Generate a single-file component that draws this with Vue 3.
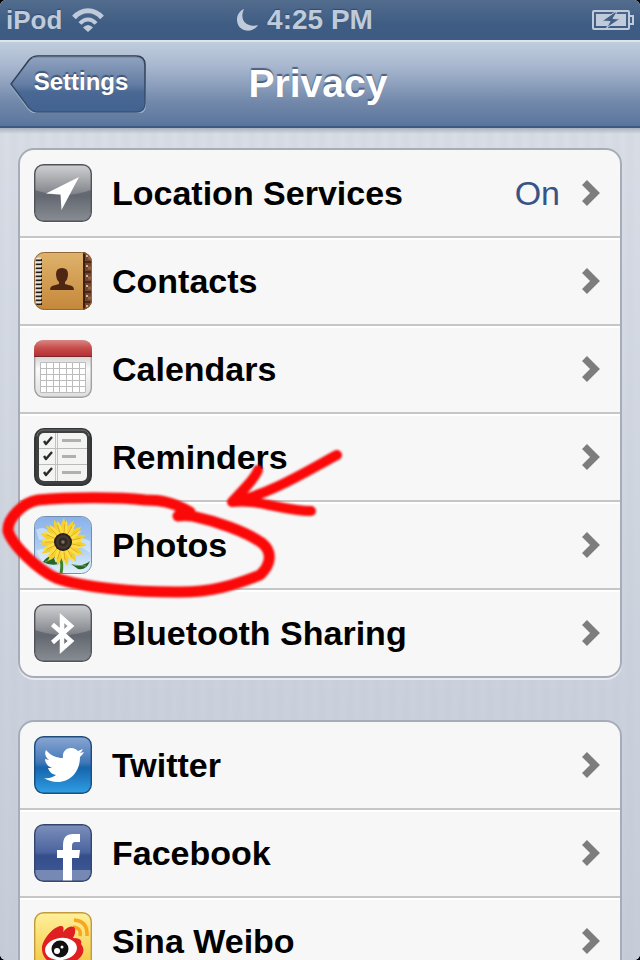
<script setup>
const groups = [
  [
    { id: 'location', label: 'Location Services', value: 'On' },
    { id: 'contacts', label: 'Contacts' },
    { id: 'calendars', label: 'Calendars' },
    { id: 'reminders', label: 'Reminders' },
    { id: 'photos', label: 'Photos' },
    { id: 'bluetooth', label: 'Bluetooth Sharing' },
  ],
  [
    { id: 'twitter', label: 'Twitter' },
    { id: 'facebook', label: 'Facebook' },
    { id: 'weibo', label: 'Sina Weibo' },
  ],
]
const range = (n) => Array.from({ length: n }, (_, i) => i)
const petals = range(15)
const rings = range(12)
const tabs = range(6)
</script>

<template>
  <div class="screen">
    <header class="status">
      <div class="status-side">
        <span class="device">iPod</span>
        <svg class="wifi" viewBox="0 0 32 24" aria-hidden="true">
          <g fill="none" stroke="currentColor" stroke-width="5">
            <path d="M2 9.500C10 .500 22 .500 30 9.500" />
            <path d="M8 15.500C12.500 10 19.500 10 24 15.500" stroke-width="4" />
          </g>
          <path d="M11 19.500q5-5 10 0L16 24z" fill="currentColor" />
        </svg>
      </div>
      <div class="clock">
        <svg class="moon" viewBox="0 0 22 22" aria-hidden="true">
          <path d="M7 0C-2 4-2 16 5 20c6 3.500 13 1 16-4C9 19 2 11 7 0z" fill="currentColor" />
        </svg>
        <span>4:25 PM</span>
      </div>
      <div class="status-side end">
        <svg class="battery" viewBox="0 0 42 20" aria-hidden="true">
          <rect x="1" y="1" width="36" height="18" rx="1" fill="none" stroke="currentColor" stroke-width="2" />
          <path d="M4 4h30v12H4z" fill="currentColor" />
          <path d="M38 6h3v8h-3" fill="none" stroke="currentColor" stroke-width="2" />
          <path d="M23 2L10 11l8 .500L14.500 18 28 9l-7-.500L25 2z" fill="#435f86" stroke="#bfcbda" stroke-width="1" />
        </svg>
      </div>
    </header>

    <nav class="navbar">
      <button class="back" type="button">
        <svg class="back-shape" viewBox="0 0 136 58" preserveAspectRatio="none" aria-hidden="true">
          <defs>
            <linearGradient id="back-fill" x2="0" y2="1">
              <stop offset="0" stop-color="#91a4c0" />
              <stop offset=".5" stop-color="#657ea4" />
              <stop offset=".65" stop-color="#4a6894" />
              <stop offset="1" stop-color="#42628f" />
            </linearGradient>
            <linearGradient id="back-line" x2="0" y2="1">
              <stop offset="0" stop-color="#2d3a4d" />
              <stop offset="1" stop-color="#375378" />
            </linearGradient>
          </defs>
          <path d="M1 30L19 6Q23 2 28 2H126Q135 2 135 11V50Q135 58 126 58H28Q23 58 19 54Z" fill="none" stroke="#9fb1ca" stroke-width="2" />
          <path d="M1 29L19 5Q23 1 28 1H126Q135 1 135 10V48Q135 57 126 57H28Q23 57 19 53Z" fill="url(#back-fill)" stroke="url(#back-line)" stroke-width="1.500" />
          <path d="M22 3Q24 2 28 2H126Q132 2 134 8" fill="none" stroke="#6c7e99" stroke-width="1" />
        </svg>
        <span class="back-text">Settings</span>
      </button>
      <h1>Privacy</h1>
    </nav>

    <main>
      <ul v-for="(group, g) in groups" :key="g" class="group">
        <li v-for="item in group" :key="item.id">
          <a class="row" :href="'#' + item.id">
            <svg v-if="item.id === 'location'" class="icon" viewBox="0 0 58 58" aria-hidden="true">
              <defs>
                <linearGradient id="grey" x2="0" y2="1">
                  <stop offset="0" stop-color="#73777e" />
                  <stop offset=".55" stop-color="#63676f" />
                  <stop offset="1" stop-color="#888d94" />
                </linearGradient>
                <linearGradient id="gloss" x2="0" y2="1">
                  <stop offset="0" stop-color="#fff" stop-opacity=".65" />
                  <stop offset="1" stop-color="#fff" stop-opacity=".16" />
                </linearGradient>
              </defs>
              <rect x="1" y="1" width="56" height="56" rx="9" fill="url(#grey)" />
              <path d="M1 26V10Q1 1 10 1H48Q57 1 57 10V26Q29 36 1 26Z" fill="url(#gloss)" />
              <rect x=".7" y=".7" width="56.600" height="56.600" rx="9" fill="none" stroke="#50545a" stroke-width="1.400" />
              <path d="M45 13L12 29.500 26.500 30.500 27.500 46Z" fill="#fff" />
            </svg>

            <svg v-else-if="item.id === 'contacts'" class="icon" viewBox="0 0 58 58" aria-hidden="true">
              <defs>
                <linearGradient id="leather" x2="0" y2="1">
                  <stop offset="0" stop-color="#dfb36c" />
                  <stop offset="1" stop-color="#c5873a" />
                </linearGradient>
                <clipPath id="contacts-clip"><rect width="58" height="58" rx="10" /></clipPath>
              </defs>
              <g clip-path="url(#contacts-clip)">
                <rect width="58" height="58" fill="url(#leather)" />
                <rect x="49" width="9" height="58" fill="#74452c" />
                <path d="M50 0V58" stroke="#3c2012" stroke-width="2" />
                <g v-for="n in tabs" :key="n">
                  <path :d="`M51 ${n * 10}h7`" stroke="#371e13" stroke-width="1.500" />
                  <path :d="`M52 ${n * 10 + 4}h2`" stroke="#f1dcc6" stroke-width="1.500" />
                  <path :d="`M54 ${n * 10 + 6}h4`" stroke="#936448" stroke-width="3" />
                </g>
                <g v-for="n in rings" :key="'r' + n">
                  <path :d="`M2 ${n * 4 + 8}h6`" stroke="#26190f" stroke-width="2" />
                  <path :d="`M1 ${n * 4 + 6.500}h6`" stroke="#e2e5e4" stroke-width="2" />
                </g>
              </g>
              <rect x=".5" y=".5" width="57" height="57" rx="10" fill="none" stroke="#92683a" />
              <path d="M22 22Q22 16 28 16T34 22Q34 27 31 30V32L38 34Q40 35 40 38H16Q16 35 18 34L25 32V30Q22 27 22 22Z" fill="#4e2614" />
            </svg>

            <svg v-else-if="item.id === 'calendars'" class="icon" viewBox="0 0 58 58" aria-hidden="true">
              <defs>
                <linearGradient id="red" x2="0" y2="1">
                  <stop offset="0" stop-color="#d98785" />
                  <stop offset=".5" stop-color="#c74d4c" />
                  <stop offset="1" stop-color="#b52f34" />
                </linearGradient>
                <linearGradient id="paper" x2="0" y2="1">
                  <stop offset="0" stop-color="#dadada" />
                  <stop offset=".3" stop-color="#d8d8d8" />
                  <stop offset=".5" stop-color="#fafafa" />
                  <stop offset="1" stop-color="#ddd" />
                </linearGradient>
              </defs>
              <rect x=".7" y=".7" width="56.600" height="56.600" rx="9" fill="url(#paper)" stroke="#a0a0a0" stroke-width="1.400" />
              <path d="M0 16V10Q0 0 10 0H48Q58 0 58 10V16Z" fill="url(#red)" />
              <path d="M0 16.500H58" stroke="#7d2529" />
              <rect x="7" y="23" width="45" height="30" fill="#fff" />
              <path d="M6.500 22.500h45v30h-45zM6.500 28.500h45M6.500 34.500h45M6.500 40.500h45M6.500 46.500h45M12.500 22.500v30M19.500 22.500v30M25.500 22.500v30M32.500 22.500v30M38.500 22.500v30M45.500 22.500v30" fill="none" stroke="#bcbcbc" />
            </svg>

            <svg v-else-if="item.id === 'reminders'" class="icon" viewBox="0 0 58 58" aria-hidden="true">
              <rect x="1" y="1" width="56" height="56" rx="9" fill="#3e3f40" stroke="#343536" stroke-width="2" />
              <path d="M3 8Q4 2 10 2H48Q54 2 55 8" fill="none" stroke="#737475" />
              <rect x="5" y="5" width="48" height="48" rx="5" fill="#f4f4f3" />
              <path d="M5 20.500H53M5 36.500H53" stroke="#bbb" />
              <path d="M21.500 5V53M23.500 5V53" stroke="#f0aeb0" />
              <path d="M28 12.500H47M28 28.500H42M28 44.500H47" stroke="#aeb0b1" stroke-width="3" />
              <path v-for="y in [13, 28, 44]" :key="y" :d="`M10 ${y}l2 3 6-7`" fill="none" stroke="#292a2c" stroke-width="2.400" stroke-linejoin="round" />
            </svg>

            <svg v-else-if="item.id === 'photos'" class="icon" viewBox="0 0 58 58" aria-hidden="true">
              <defs>
                <linearGradient id="sky" x2="0" y2="1">
                  <stop offset="0" stop-color="#8ab1ea" />
                  <stop offset=".5" stop-color="#a7caf3" />
                  <stop offset="1" stop-color="#e2f1fa" />
                </linearGradient>
                <radialGradient id="seed">
                  <stop offset="0" stop-color="#9a9284" />
                  <stop offset=".3" stop-color="#29211c" />
                  <stop offset=".65" stop-color="#493c33" />
                  <stop offset="1" stop-color="#18120f" />
                </radialGradient>
              </defs>
              <rect x="1" y="1" width="56" height="56" rx="9" fill="url(#sky)" />
              <path d="M2 14q8-5 13 2t-10 8zM37 27q10-8 19-2v12q-9-7-19-10zM2 35q11-6 19 1L9 47z" fill="#e8f2fc" opacity=".55" />
              <path d="M26 41Q29 48 27 57" fill="none" stroke="#3c842c" stroke-width="3" />
              <path d="M25 48Q16 50 9 46Q13 39 21 40Q18 44 25 48ZM37 48Q47 52 56 45Q52 55 44 53Z" fill="#276426" />
              <path d="M11 46L21 41M39 49L52 50" stroke="#73a94d" />
              <circle cx="29" cy="26" r="15" fill="#eeb51f" />
              <path v-for="n in petals" :key="n" d="M30 2Q33 10 31 21H27Q25 9 30 2Z" fill="#f5cf2c" :transform="`rotate(${n * 24} 29 26)`" />
              <path v-for="n in petals" :key="'i' + n" d="M28 4Q32 11 31 21H27Q26 11 28 4Z" fill="#fbdf45" :transform="`rotate(${n * 24 + 12} 29 26)`" />
              <path v-for="n in petals" :key="'l' + n" d="M29 8V18" stroke="#dfa01b" stroke-width=".800" :transform="`rotate(${n * 24 + 6} 29 26)`" />
              <circle cx="29" cy="26" r="9" fill="url(#seed)" />
              <rect x=".5" y=".5" width="57" height="57" rx="10" fill="none" stroke="#738ead" />
            </svg>

            <svg v-else-if="item.id === 'bluetooth'" class="icon" viewBox="0 0 58 58" aria-hidden="true">
              <rect x="1" y="1" width="56" height="56" rx="9" fill="url(#grey)" />
              <path d="M1 26V10Q1 1 10 1H48Q57 1 57 10V26Q29 36 1 26Z" fill="url(#gloss)" />
              <rect x=".7" y=".7" width="56.600" height="56.600" rx="9" fill="none" stroke="#50545a" stroke-width="1.400" />
              <path d="M18.500 20.500L37 37 28 45V14L37 22 18.500 38.500" fill="none" stroke="#fff" stroke-width="4.500" />
            </svg>

            <svg v-else-if="item.id === 'twitter'" class="icon" viewBox="0 0 58 58" aria-hidden="true">
              <defs>
                <linearGradient id="twitter-fill" x2="0" y2="1">
                  <stop offset="0" stop-color="#8ba6d2" />
                  <stop offset=".45" stop-color="#4278b8" />
                  <stop offset=".55" stop-color="#1765ac" />
                  <stop offset="1" stop-color="#2fa0e5" />
                </linearGradient>
              </defs>
              <rect x=".7" y=".7" width="56.600" height="56.600" rx="9" fill="url(#twitter-fill)" stroke="#1b4e7f" stroke-width="1.400" />
              <path d="M12 14C17 20 23 22 29 22C28 16 32 12 37 12C40 12 42 13 44 15L49 13C48 15 47 16 46 17L50 16C49 18 47 20 46 21C46 36 36 46 24 46C18 46 13 44 10 42C15 43 19 41 22 39C17 38 15 35 14 32H18C13 30 11 26 11 23L15 24C10 20 11 16 12 14Z" fill="#fff" />
            </svg>

            <svg v-else-if="item.id === 'facebook'" class="icon" viewBox="0 0 58 58" aria-hidden="true">
              <defs>
                <linearGradient id="facebook-fill" x2="0" y2="1">
                  <stop offset="0" stop-color="#7c8fba" />
                  <stop offset=".48" stop-color="#4c65a0" />
                  <stop offset=".55" stop-color="#344e8b" />
                  <stop offset="1" stop-color="#3e5b98" />
                </linearGradient>
              </defs>
              <rect x="1" y="1" width="56" height="56" rx="9" fill="url(#facebook-fill)" />
              <path d="M1 46H57V50Q56 57 49 57H9Q2 57 1 50Z" fill="#7689b5" />
              <path d="M29 57V34H23V26H29V21Q29 10 39 10H46V18H41Q38 18 38 22V26H46L45 34H38V57Z" fill="#fff" />
              <rect x=".7" y=".7" width="56.600" height="56.600" rx="9" fill="none" stroke="#34466f" stroke-width="1.400" />
            </svg>

            <svg v-else class="icon" viewBox="0 0 58 58" aria-hidden="true">
              <defs>
                <linearGradient id="weibo-fill" x2="0" y2="1">
                  <stop offset="0" stop-color="#fff09b" />
                  <stop offset="1" stop-color="#f2c63f" />
                </linearGradient>
              </defs>
              <rect x=".7" y=".7" width="56.600" height="56.600" rx="9" fill="url(#weibo-fill)" stroke="#c39b3c" stroke-width="1.400" />
              <g fill="none" stroke="#f8a61c" stroke-width="3.500">
                <path d="M40 8Q54 9 53 24" />
                <path d="M39 15Q48 16 46 24" />
              </g>
              <path d="M8 38C7 29 18 16 26 14Q31 13 29 20C34 14 40 13 41 17Q42 21 39 26Q49 26 47 32C54 40 45 52 28 53C16 53 9 47 8 38Z" fill="#df1f21" />
              <ellipse cx="27" cy="37" rx="16" ry="11" fill="#fff" transform="rotate(-8 27 37)" />
              <circle cx="26" cy="37" r="8.500" fill="#111" />
              <circle cx="23" cy="39" r="3" fill="#fff" />
              <circle cx="28" cy="35" r="1.500" fill="#fff" />
            </svg>

            <span class="label">{{ item.label }}</span>
            <span v-if="item.value" class="value">{{ item.value }}</span>
            <svg class="chevron" viewBox="0 0 18 26" aria-hidden="true">
              <path d="M2.500 2.500L13 13 2.500 23.500" fill="none" stroke="#7d7d7d" stroke-width="7" />
            </svg>
          </a>
        </li>
      </ul>
    </main>

    <svg class="marker" viewBox="0 0 350 160" aria-hidden="true">
      <g fill="none" stroke="#fb0808" stroke-width="11" stroke-linecap="round" stroke-linejoin="round">
        <path d="M190 72C173 62 160 60 145 60C120 57 70 57 38 60C24 62 7 78 8 91C12 105 38 130 56 138C85 148 135 152 175 152C210 153 235 145 260 135C271 125 273 112 262 103C245 91 215 81 192 76Q185 75 178 76" />
        <path d="M337 15C312 28 270 55 232 62L245 48Q256 36 258 30M232 62C260 59 282 71 311 71" stroke-width="10" />
      </g>
    </svg>
  </div>
</template>

<style>
body {
  margin: 0;
  background: #000;
}
</style>

<style scoped>
.screen {
  position: relative;
  display: flex;
  flex-direction: column;
  height: 100vh;
  overflow: hidden;
  border-radius: 6px;
  background: #d3d8e1;
  font-family: "Liberation Sans", Helvetica, Arial, sans-serif;
  font-weight: bold;
}

.status {
  display: grid;
  grid-template-columns: 1fr auto 1fr;
  align-items: center;
  flex: none;
  height: 40px;
  padding: 0 6px;
  box-sizing: border-box;
  background: linear-gradient(#526c8d, #3f5d84 60%, #3e5c82);
  color: #bfcbda;
  font-size: 28px;
  text-shadow: 0 -1px 1px #34496a;
}

.status-side,
.clock {
  display: flex;
  align-items: center;
  gap: 10px;
}

.clock {
  gap: 8px;
  padding-right: 30px;
}

.device {
  font-size: 26px;
}

.end {
  justify-content: flex-end;
}

.wifi {
  width: 32px;
  height: 24px;
}

.moon {
  width: 22px;
  height: 22px;
}

.battery {
  width: 42px;
  height: 20px;
}

.navbar {
  display: grid;
  grid-template-columns: 1fr auto 1fr;
  align-items: center;
  flex: none;
  height: 88px;
  padding: 0 10px;
  box-sizing: border-box;
  border-top: 2px solid #dce4ed;
  border-bottom: 2px solid #3b5981;
  background: linear-gradient(#c0cddd, #a9b8cf 28%, #7188aa 72%, #5a759d);
  color: #fff;
}

.back {
  position: relative;
  width: 136px;
  height: 58px;
  padding: 0 0 4px 6px;
  border: 0;
  background: none;
  color: #fff;
  font: bold 24px "Liberation Sans", Helvetica, Arial, sans-serif;
  text-shadow: 0 -2px 1px #415575;
}

.back-shape {
  position: absolute;
  inset: 0;
  width: 100%;
  height: 100%;
}

.back-text {
  position: relative;
}

h1 {
  margin: 0;
  padding-right: 4px;
  font-size: 39px;
  line-height: 48px;
  text-shadow: 0 -2px 1px #4d617f;
}

main {
  display: flex;
  flex-direction: column;
  gap: 42px;
  flex: 1;
  min-height: 0;
  overflow: hidden;
  padding: 20px 18px;
  background:
    linear-gradient(#a9b1be, transparent 6px),
    linear-gradient(transparent, rgb(176 184 200 / 45%)),
    repeating-linear-gradient(90deg, #d4d9e2 0, #d8dde6 7px, #d4d9e2 14px);
}

.group {
  flex: none;
  margin: 0;
  padding: 0;
  list-style: none;
  border: 2px solid #a6adb9;
  border-radius: 16px;
  background: #f7f7f7;
  box-shadow: 0 2px 0 #e7eaf0;
}

.group li + li {
  border-top: 2px solid #c5c6c8;
  box-shadow: inset 0 2px 0 #fff;
}

.row {
  display: flex;
  align-items: center;
  height: 86px;
  padding: 0 20px 0 14px;
  color: #000;
  text-decoration: none;
}

.icon {
  flex: none;
  width: 58px;
  height: 58px;
  margin-right: 20px;
  filter: drop-shadow(0 1px 0 #fff);
}

.label {
  flex: 1;
  font-size: 34px;
  line-height: 40px;
}

.value {
  margin-right: 22px;
  color: #385487;
  font-size: 34px;
  font-weight: normal;
  line-height: 40px;
}

.chevron {
  flex: none;
  width: 18px;
  height: 26px;
}

.marker {
  position: absolute;
  top: 440px;
  left: 0;
  width: 350px;
  height: 160px;
  pointer-events: none;
  filter: blur(1px);
}
</style>
